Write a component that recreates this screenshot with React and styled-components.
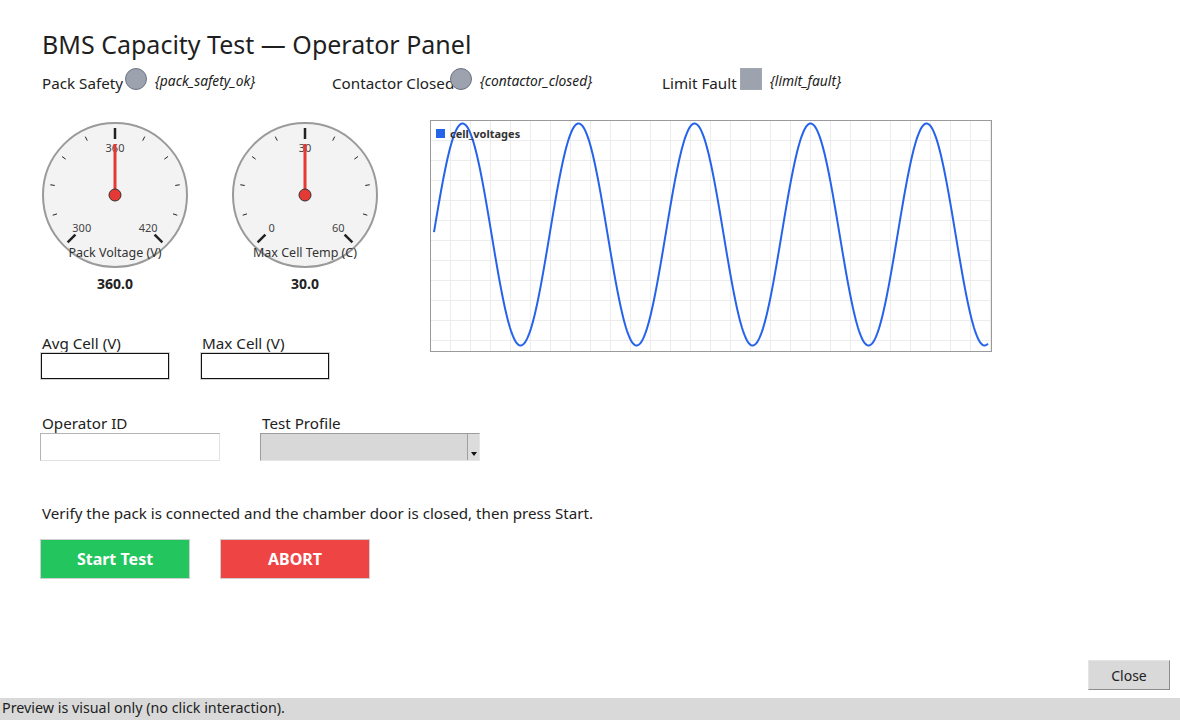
import React from 'react';
import styled, { createGlobalStyle } from 'styled-components';

const GlobalStyle = createGlobalStyle`
  html, body {
    margin: 0;
    padding: 0;
    background: #ffffff;
  }
  body {
    font-family: "Noto Sans", "DejaVu Sans", sans-serif;
    color: #222;
  }
  * {
    box-sizing: border-box;
  }
`;

const Page = styled.div`
  width: 1180px;
  height: 720px;
  display: flex;
  flex-direction: column;
  overflow: hidden;
`;

const Main = styled.div`
  flex: 1;
  display: flex;
  flex-direction: column;
  padding: 27px 10px 8px 40px;
  background: #fff;
`;

const Title = styled.h1`
  margin: 0 0 0 2px;
  font-size: 25px;
  font-weight: 400;
  line-height: 34px;
  color: #1f1f1f;
`;

const IndicatorRow = styled.div`
  display: flex;
  margin: 7px 0 0 2px;
  height: 24px;
`;

const IndicatorGroup = styled.div`
  display: flex;
  align-items: flex-start;
  width: ${p => p.width ? `${p.width}px` : 'auto'};
`;

const IndicatorLabel = styled.span`
  width: ${p => p.width}px;
  margin-top: 5px;
  font-size: 15.2px;
  line-height: 20px;
  white-space: nowrap;
  color: #222;
`;

const Lamp = styled.span`
  position: relative;
  flex: none;
  width: 22px;
  height: 22px;
  background: #9ca3af;
  border: 1px solid ${p => p.square ? '#a3a7b0' : '#6b7280'};
  border-radius: ${p => p.square ? '0' : '50%'};
`;

const Tag = styled.span`
  margin: 4px 0 0 8px;
  font-size: 13.8px;
  font-style: italic;
  line-height: 18px;
  color: #222;
`;

const TopSection = styled.div`
  display: flex;
  align-items: flex-start;
  margin-top: 28px;
`;

const LeftColumn = styled.div`
  display: flex;
  flex-direction: column;
  width: 340px;
`;

const GaugeRow = styled.div`
  display: flex;
  gap: 40px;
`;

const GaugeBox = styled.div`
  width: 150px;
  display: flex;
  flex-direction: column;
  align-items: center;
`;

const GaugeValue = styled.div`
  margin-top: 5px;
  font-size: 14px;
  font-weight: 700;
  line-height: 18px;
  color: #222;
`;

const TickLabel = styled.text`
  font-family: "Noto Sans", sans-serif;
  font-size: 11px;
  fill: #444;
`;

const GaugeCaption = styled.text`
  font-family: "Noto Sans", sans-serif;
  font-size: 12.5px;
  fill: #333;
`;

const FieldRow = styled.div`
  display: flex;
  gap: ${p => p.gap}px;
  margin-top: ${p => p.top}px;
`;

const Field = styled.div`
  display: flex;
  flex-direction: column;
  width: ${p => p.width}px;
`;

const FieldLabel = styled.label`
  padding-left: 2px;
  font-size: 15.2px;
  line-height: 20px;
  color: #222;
`;

const NumberBox = styled.input`
  width: 128px;
  height: 26px;
  margin: 0 0 0 1px;
  padding: 0 4px;
  border: 1px solid #111;
  outline: 1px solid #d4d4d4;
  background: #fff;
  font: inherit;
`;

const TextBox = styled.input`
  width: 100%;
  height: 28px;
  margin: 0;
  padding: 0 4px;
  border: 1px solid;
  border-color: #b4b4b4 #e2e2e2 #e2e2e2 #b4b4b4;
  background: #fff;
  font: inherit;
`;

const SelectBox = styled.div`
  display: flex;
  justify-content: flex-end;
  width: 100%;
  height: 28px;
  border: 1px solid;
  border-color: #9c9c9c #e6e6e6 #e6e6e6 #9c9c9c;
  background: #d8d8d8;
`;

const SelectButton = styled.div`
  display: flex;
  align-items: flex-end;
  justify-content: center;
  width: 12px;
  padding-bottom: 4px;
  border-left: 1px solid #a0a0a0;
  background: #dcdcdc;

  &::after {
    content: '';
    border-left: 3.5px solid transparent;
    border-right: 3.5px solid transparent;
    border-top: 4px solid #111;
  }
`;

const Chart = styled.div`
  position: relative;
  flex: none;
  width: 562px;
  height: 232px;
  margin-left: 50px;
  border: 1px solid #9a9a9a;
  background: #fff;
`;

const Legend = styled.div`
  position: absolute;
  top: 6px;
  left: 5px;
  display: flex;
  align-items: center;
  gap: 5px;
  font-size: 11px;
  font-weight: 700;
  line-height: 13px;
  color: #333;
`;

const LegendSwatch = styled.span`
  width: 9px;
  height: 9px;
  background: ${p => p.color};
`;

const Instruction = styled.p`
  margin: 42px 0 0 2px;
  font-size: 15.15px;
  line-height: 20px;
  color: #222;
`;

const ButtonRow = styled.div`
  display: flex;
  gap: 30px;
  margin-top: 16px;
`;

const ActionButton = styled.button`
  width: 150px;
  height: 40px;
  border: 1px solid #cfcfcf;
  background: ${p => p.color};
  color: #fff;
  font-family: inherit;
  font-size: 16px;
  font-weight: 700;
  cursor: pointer;
`;

const Footer = styled.div`
  display: flex;
  justify-content: flex-end;
  margin-top: auto;
`;

const CloseButton = styled.button`
  width: 82px;
  height: 30px;
  border: 1px solid;
  border-color: #e4e4e4 #8c8c8c #8c8c8c #e4e4e4;
  background: #d9d9d9;
  color: #222;
  font-family: inherit;
  font-size: 14px;
  cursor: pointer;
`;

const StatusBar = styled.div`
  height: 22px;
  padding-left: 2px;
  background: #d9d9d9;
  font-size: 14.3px;
  line-height: 20px;
  color: #222;
`;

const TICKS = Array.from({ length: 11 }, (_, i) => -135 + i * 27);

const polar = (r, deg) => {
  const rad = (deg * Math.PI) / 180;
  return [75 + r * Math.sin(rad), 75 - r * Math.cos(rad)];
};

const Gauge = ({ min, max, value, label }) => {
  const angle = -135 + (270 * (value - min)) / (max - min);
  const [nx, ny] = polar(51, angle);
  const labels = [
    [min, -135],
    [(min + max) / 2, 0],
    [max, 135],
  ];

  return (
    <GaugeBox>
      <svg width="150" height="150" viewBox="0 0 150 150">
        <circle cx="75" cy="75" r="72" fill="#f3f3f3" stroke="#9a9a9a" strokeWidth="2" />
        {TICKS.map((deg, i) => {
          const major = i % 5 === 0;
          const [x1, y1] = polar(major ? 56 : 61, deg);
          const [x2, y2] = polar(major ? 67 : 65.5, deg);
          return (
            <line
              key={deg}
              x1={x1}
              y1={y1}
              x2={x2}
              y2={y2}
              stroke="#222"
              strokeWidth={major ? 2.5 : 1}
            />
          );
        })}
        {labels.map(([v, deg]) => {
          const [x, y] = polar(47, deg);
          return (
            <TickLabel key={deg} x={x} y={y - 0.5} textAnchor="middle" dominantBaseline="central">
              {v}
            </TickLabel>
          );
        })}
        <line x1="75" y1="75" x2={nx} y2={ny} stroke="#e53935" strokeWidth="3" />
        <circle cx="75" cy="75" r="6" fill="#e53935" stroke="#333" strokeWidth="1" />
        <GaugeCaption x="75" y="132.5" textAnchor="middle" dominantBaseline="central">
          {label}
        </GaugeCaption>
      </svg>
      <GaugeValue>{value.toFixed(1)}</GaugeValue>
    </GaugeBox>
  );
};

// sine trace in inner chart coordinates (outer box starts at x=430, y=120)
const wavePoints = () => {
  const pts = [];
  for (let xo = 434; xo <= 988; xo += 1) {
    const y = 234.5 - 111 * Math.sin((2 * Math.PI * (xo - 433.6)) / 116);
    pts.push(`${xo - 431},${(y - 121).toFixed(2)}`);
  }
  return pts.join(' ');
};

const VoltageChart = () => {
  const vLines = Array.from({ length: 28 }, (_, i) => 19 + i * 20);
  const hLines = Array.from({ length: 11 }, (_, i) => 19 + i * 20);

  return (
    <Chart>
      <svg width="560" height="230" viewBox="0 0 560 230" style={{ display: 'block' }}>
        {vLines.map(x => (
          <line key={`v${x}`} x1={x + 0.5} y1="0" x2={x + 0.5} y2="230" stroke="#ececec" strokeWidth="1" />
        ))}
        {hLines.map(y => (
          <line key={`h${y}`} x1="0" y1={y + 0.5} x2="560" y2={y + 0.5} stroke="#ececec" strokeWidth="1" />
        ))}
        <polyline points={wavePoints()} fill="none" stroke="#2563eb" strokeWidth="2" />
      </svg>
      <Legend>
        <LegendSwatch color="#2563eb" />
        cell_voltages
      </Legend>
    </Chart>
  );
};

const App = () => {
  return (
    <Page>
      <GlobalStyle />
      <Main>
        <Title>BMS Capacity Test — Operator Panel</Title>

        <IndicatorRow>
          <IndicatorGroup width={290}>
            <IndicatorLabel width={83}>Pack Safety</IndicatorLabel>
            <Lamp />
            <Tag>{'{pack_safety_ok}'}</Tag>
          </IndicatorGroup>
          <IndicatorGroup width={330}>
            <IndicatorLabel width={118}>Contactor Closed</IndicatorLabel>
            <Lamp />
            <Tag>{'{contactor_closed}'}</Tag>
          </IndicatorGroup>
          <IndicatorGroup>
            <IndicatorLabel width={78}>Limit Fault</IndicatorLabel>
            <Lamp square />
            <Tag>{'{limit_fault}'}</Tag>
          </IndicatorGroup>
        </IndicatorRow>

        <TopSection>
          <LeftColumn>
            <GaugeRow>
              <Gauge min={300} max={420} value={360} label="Pack Voltage (V)" />
              <Gauge min={0} max={60} value={30} label="Max Cell Temp (C)" />
            </GaugeRow>
            <FieldRow gap={31} top={40}>
              <Field width={129}>
                <FieldLabel>Avg Cell (V)</FieldLabel>
                <NumberBox readOnly />
              </Field>
              <Field width={129}>
                <FieldLabel>Max Cell (V)</FieldLabel>
                <NumberBox readOnly />
              </Field>
            </FieldRow>
          </LeftColumn>
          <VoltageChart />
        </TopSection>

        <FieldRow gap={40} top={34}>
          <Field width={180}>
            <FieldLabel>Operator ID</FieldLabel>
            <TextBox readOnly />
          </Field>
          <Field width={220}>
            <FieldLabel>Test Profile</FieldLabel>
            <SelectBox>
              <SelectButton />
            </SelectBox>
          </Field>
        </FieldRow>

        <Instruction>
          Verify the pack is connected and the chamber door is closed, then press Start.
        </Instruction>

        <ButtonRow>
          <ActionButton color="#22c55e">Start Test</ActionButton>
          <ActionButton color="#ef4444">ABORT</ActionButton>
        </ButtonRow>

        <Footer>
          <CloseButton>Close</CloseButton>
        </Footer>
      </Main>
      <StatusBar>Preview is visual only (no click interaction).</StatusBar>
    </Page>
  );
};

export default App;
